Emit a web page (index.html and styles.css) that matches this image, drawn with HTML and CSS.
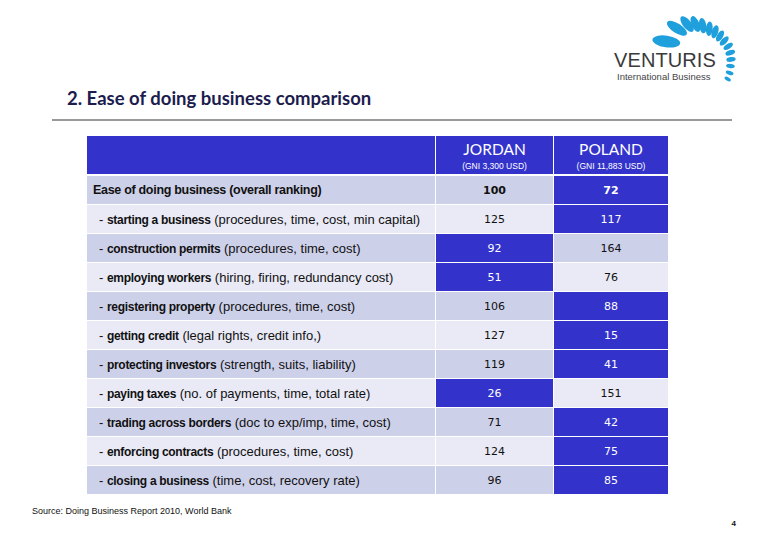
FILE: index.html
```html
<!DOCTYPE html>
<html>
<head>
<meta charset="utf-8">
<title>Ease of doing business comparison</title>
<link rel="stylesheet" href="styles.css">
</head>
<body>
<div class="page">
  <div class="top">
    <div class="logo">
      <svg class="leaves" width="130" height="76" viewBox="0 0 130 76">
        <g transform="translate(86,48)" fill="#1f9fdc">
          <ellipse transform="rotate(-148) translate(35,0) rotate(-24)" rx="14" ry="5.8"/>
          <ellipse transform="rotate(-121) translate(37,0) rotate(-26)" rx="11.5" ry="4.8"/>
          <ellipse transform="rotate(-104) translate(37,0) rotate(-24)" rx="9.5" ry="4.2"/>
          <ellipse transform="rotate(-91) translate(36,0) rotate(-22)" rx="8.5" ry="3.9"/>
          <ellipse transform="rotate(-79) translate(35,0) rotate(-20)" rx="7.8" ry="3.6"/>
          <ellipse transform="rotate(-67) translate(34,0) rotate(-18)" rx="7.2" ry="3.4"/>
          <ellipse transform="rotate(-56) translate(34,0) rotate(-16)" rx="6.7" ry="3.2"/>
          <ellipse transform="rotate(-45) translate(34,0) rotate(-14)" rx="6.2" ry="3"/>
          <ellipse transform="rotate(-34) translate(34,0) rotate(-12)" rx="5.8" ry="2.8"/>
          <ellipse transform="rotate(-23) translate(35,0) rotate(-10)" rx="5.4" ry="2.6"/>
          <ellipse transform="rotate(-12) translate(35,0) rotate(-8)" rx="5" ry="2.5"/>
          <ellipse transform="rotate(-1) translate(35,0) rotate(-6)" rx="4.7" ry="2.4"/>
          <ellipse transform="rotate(10) translate(35,0) rotate(-4)" rx="4.4" ry="2.2"/>
          <ellipse transform="rotate(21) translate(36,0) rotate(-2)" rx="4" ry="2"/>
          <ellipse transform="rotate(31) translate(37,0) rotate(0)" rx="3.5" ry="1.8"/>
        </g>
      </svg>
      <div class="brand">VENTURIS</div>
      <div class="tagline">International Business</div>
    </div>
  </div>
  <h1 class="title">2. Ease of doing business comparison</h1>
  <div class="rule"></div>
  <table class="cmp">
    <colgroup>
      <col class="c-label">
      <col class="c-jo">
      <col class="c-pl">
    </colgroup>
    <thead>
      <tr>
        <th></th>
        <th><div class="country">JORDAN</div><div class="gni">(GNI 3,300 USD)</div></th>
        <th><div class="country">POLAND</div><div class="gni">(GNI 11,883 USD)</div></th>
      </tr>
    </thead>
    <tbody>
      <tr class="mid overall"><td class="label">Ease of doing business (overall ranking)</td><td>100</td><td class="hi">72</td></tr>
      <tr class="lite"><td class="label sub">- <b>starting a business</b> (procedures, time, cost, min capital)</td><td>125</td><td class="hi">117</td></tr>
      <tr class="mid"><td class="label sub">- <b>construction permits</b> (procedures, time, cost)</td><td class="hi">92</td><td>164</td></tr>
      <tr class="lite"><td class="label sub">- <b>employing workers</b> (hiring, firing, redundancy cost)</td><td class="hi">51</td><td>76</td></tr>
      <tr class="mid"><td class="label sub">- <b>registering property</b> (procedures, time, cost)</td><td>106</td><td class="hi">88</td></tr>
      <tr class="lite"><td class="label sub">- <b>getting credit</b> (legal rights, credit info,)</td><td>127</td><td class="hi">15</td></tr>
      <tr class="mid"><td class="label sub">- <b>protecting investors</b> (strength, suits, liability)</td><td>119</td><td class="hi">41</td></tr>
      <tr class="lite"><td class="label sub">- <b>paying taxes</b> (no. of payments, time, total rate)</td><td class="hi">26</td><td>151</td></tr>
      <tr class="mid"><td class="label sub">- <b>trading across borders</b> (doc to exp/imp, time, cost)</td><td>71</td><td class="hi">42</td></tr>
      <tr class="lite"><td class="label sub">- <b>enforcing contracts</b> (procedures, time, cost)</td><td>124</td><td class="hi">75</td></tr>
      <tr class="mid"><td class="label sub">- <b>closing a business</b> (time, cost, recovery rate)</td><td>96</td><td class="hi">85</td></tr>
    </tbody>
  </table>
  <p class="source">Source: Doing Business Report 2010, World Bank</p>
  <p class="pagenum">4</p>
</div>
</body>
</html>
```

FILE: styles.css
```css
* { box-sizing: border-box; }
html, body { margin: 0; padding: 0; background: #fff; }
.page {
  width: 780px;
  height: 540px;
  overflow: hidden;
  background: #fff;
  font-family: "Liberation Sans", Arial, sans-serif;
  color: #111;
}
.top {
  height: 86px;
  display: flex;
  justify-content: flex-end;
  padding: 12px 40px 0 0;
}
.logo {
  position: relative;
  width: 130px;
  height: 74px;
  padding: 38px 0 0 4px;
}
.leaves {
  position: absolute;
  left: 0;
  top: 0;
}
.brand {
  position: relative;
  font-family: "Liberation Sans", Arial, sans-serif;
  font-size: 20px;
  line-height: 21px;
  color: #3a3a3a;
  letter-spacing: 0.1px;
}
.tagline {
  position: relative;
  font-size: 9.5px;
  line-height: 11px;
  color: #444;
  margin-left: 3px;
}
.title {
  margin: 0 0 0 67px;
  height: 24px;
  font-family: Lato, "Liberation Sans", sans-serif;
  font-weight: 700;
  font-size: 18.5px;
  line-height: 24px;
  color: #1c1c4e;
}
.rule {
  margin: 9px 0 0 52px;
  width: 680px;
  height: 2px;
  background: #999;
}
.cmp {
  margin: 15px 0 0 87px;
  width: 581px;
  table-layout: fixed;
  border-collapse: separate;
  border-spacing: 0;
}
.c-label { width: 349px; }
.c-jo { width: 118px; }
.c-pl { width: 114px; }
.cmp th {
  background: #3333cc;
  color: #fff;
  height: 40px;
  padding: 0;
  border-right: 1px solid #fff;
  border-bottom: 2px solid #fff;
  text-align: center;
  vertical-align: middle;
  font-weight: 400;
}
.cmp th:last-child, .cmp td:last-child { border-right: 0; }
.country {
  font-family: Lato, "Liberation Sans", sans-serif;
  font-size: 15.5px;
  line-height: 18px;
  margin-top: 2px;
}
.gni {
  font-size: 8.5px;
  line-height: 12px;
  margin-top: 2px;
}
.cmp td {
  height: 29px;
  padding: 0;
  border-right: 1px solid #fff;
  border-bottom: 1px solid #fff;
  text-align: center;
  vertical-align: middle;
  font-family: "DejaVu Sans", Verdana, sans-serif;
  font-size: 11px;
  color: #111;
}
.mid td { background: #cdd0e9; }
.lite td { background: #e9eaf6; }
.cmp td.hi { background: #3333cc; color: #fff; }
.cmp td.label {
  text-align: left;
  padding-left: 6px;
  font-family: "Liberation Sans", Arial, sans-serif;
  font-size: 13px;
  white-space: nowrap;
}
.cmp td.sub { padding-left: 12px; }
.sub b {
  font-size: 12px;
  letter-spacing: -0.3px;
}
.overall td { font-weight: 700; }
.overall td.label {
  font-size: 12.5px;
  letter-spacing: -0.3px;
}
.source {
  margin: 11px 0 0 32px;
  font-size: 9px;
  line-height: 11px;
  color: #111;
}
.pagenum {
  margin: 2px 44px 0 0;
  text-align: right;
  font-size: 8px;
  font-weight: 700;
  line-height: 10px;
}
```
